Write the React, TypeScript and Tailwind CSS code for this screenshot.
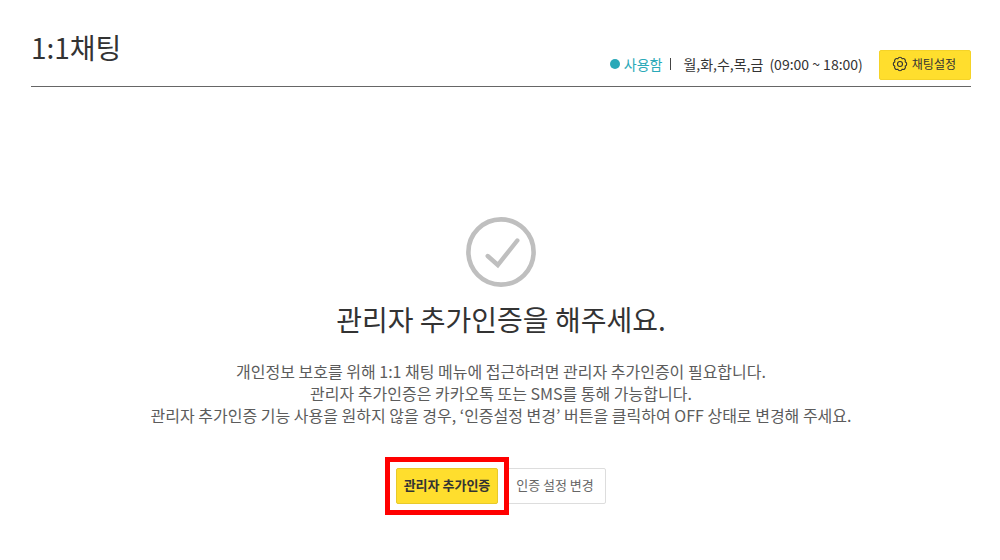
function GearIcon() {
  return (
    <svg width="16" height="16" viewBox="0 0 16 16" fill="none" stroke="currentColor" aria-hidden="true">
      <path
        d="M5.86 2.83A2.25 2.25 0 0 1 10.14 2.83A2.25 2.25 0 0 1 13.17 5.86A2.25 2.25 0 0 1 13.17 10.14A2.25 2.25 0 0 1 10.14 13.17A2.25 2.25 0 0 1 5.86 13.17A2.25 2.25 0 0 1 2.83 10.14A2.25 2.25 0 0 1 2.83 5.86A2.25 2.25 0 0 1 5.86 2.83Z"
        strokeWidth="1.1"
        strokeLinejoin="round"
      />
      <circle cx="8" cy="8" r="2.5" strokeWidth="1.1" />
    </svg>
  );
}

function CheckIcon() {
  return (
    <svg width="70" height="70" viewBox="0 0 70 70" fill="none" stroke="#bfbfbf" aria-hidden="true">
      <circle cx="35" cy="35" r="32.6" strokeWidth="4.6" />
      <path d="M21.7 39L31.8 48L51.3 23.5" strokeWidth="4.4" strokeLinecap="round" strokeLinejoin="miter" />
    </svg>
  );
}

function PageHeader() {
  return (
    <header className="flex items-end justify-between border-b border-[#666] pb-1.5">
      <h1 className="pb-[13px] text-[28px] leading-10 text-[#333]">1:1채팅</h1>
      <div className="flex items-center text-sm text-[#333]">
        <div className="flex items-center pb-0.5">
          <span className="mr-1 size-2.5 rounded-full bg-[#2aa9b8]" />
          <span className="text-[#2aa9b8]">사용함</span>
          <span className="mx-2 h-3 w-px bg-[#444]" />
          <span className="ml-1">월,화,수,목,금</span>
          <span className="ml-1.5">(09:00 ~ 18:00)</span>
        </div>
        <button
          type="button"
          className="ml-4 flex h-[30px] items-center gap-1 rounded-xs border border-[#f5d327] bg-[#ffde2d] pr-3.5 pb-0.5 pl-3 text-xs text-[#333]"
        >
          <GearIcon />
          채팅설정
        </button>
      </div>
    </header>
  );
}

export default function App() {
  return (
    <div className="min-h-screen bg-white pt-[27px] pr-[29px] pl-[31px] font-['Noto_Sans_CJK_KR',sans-serif]">
      <PageHeader />
      <main className="flex flex-col items-center pt-[130px] pb-14 text-center">
        <CheckIcon />
        <h2 className="mt-3 text-[28px] leading-10 text-[#333]">관리자 추가인증을 해주세요.</h2>
        <p className="mt-[21px] text-base leading-[22px] text-[#5c5c5c]">
          개인정보 보호를 위해 1:1 채팅 메뉴에 접근하려면 관리자 추가인증이 필요합니다.
          <br />
          관리자 추가인증은 카카오톡 또는 SMS를 통해 가능합니다.
          <br />
          관리자 추가인증 기능 사용을 원하지 않을 경우, ‘인증설정 변경’ 버튼을 클릭하여 OFF 상태로 변경해 주세요.
        </p>
        <div className="mt-[42px] flex gap-1.5 text-[13px]">
          <div className="relative z-10">
            <button
              type="button"
              className="h-9 w-[102px] rounded-xs border border-[#e8ca2a] bg-[#ffde2d] pb-0.5 font-bold text-[#333]"
            >
              관리자 추가인증
            </button>
            <div className="pointer-events-none absolute -inset-[11px] border-5 border-[#ff0000]" />
          </div>
          <button type="button" className="h-9 w-[102px] rounded-xs border border-[#ddd] bg-white pb-0.5 text-[#666]">
            인증 설정 변경
          </button>
        </div>
      </main>
    </div>
  );
}
